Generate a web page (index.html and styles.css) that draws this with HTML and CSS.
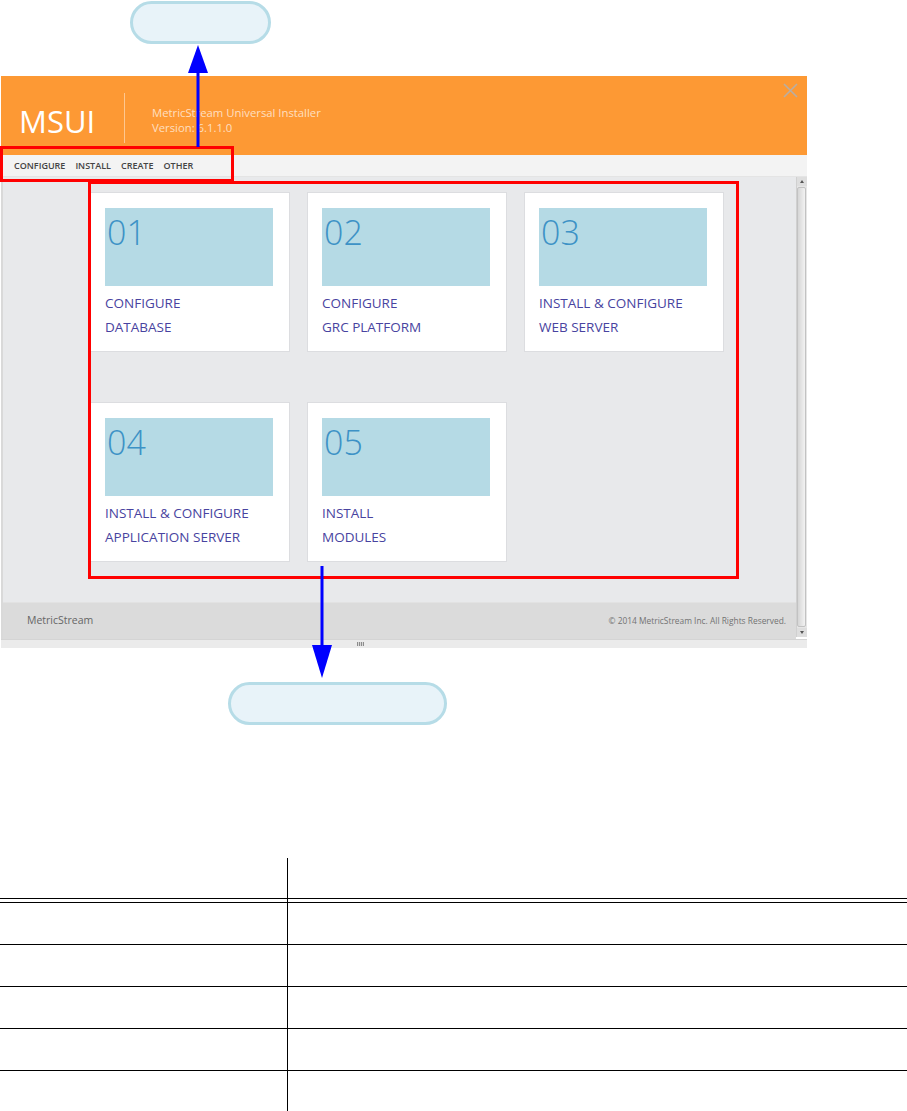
FILE: index.html
```html
<!DOCTYPE html>
<html lang="en">
<head>
  <meta charset="UTF-8">
  <title>MSUI - Home Screen</title>
  <link rel="stylesheet" href="styles.css">
</head>
<body>

  <div class="figure">
    <div class="callout callout-top"></div>

    <div class="window">
      <div class="titlebar">
        <div class="logo">MSUI</div>
        <div class="divider"></div>
        <div class="product">
          <div>MetricStream Universal Installer</div>
          <div>Version: 6.1.1.0</div>
        </div>
        <svg class="close" width="15" height="15" viewBox="0 0 15 15">
          <path d="M1 1 L14 14 M14 1 L1 14" stroke="#b8aea4" stroke-width="1.6" fill="none"/>
        </svg>
      </div>

      <div class="menubar">
        <span>CONFIGURE</span>
        <span>INSTALL</span>
        <span>CREATE</span>
        <span>OTHER</span>
      </div>

      <div class="frame">
        <div class="main">
          <div class="tiles">
            <div class="tile">
              <div class="tile-num">01</div>
              <div class="tile-label">CONFIGURE<br>DATABASE</div>
            </div>
            <div class="tile">
              <div class="tile-num">02</div>
              <div class="tile-label">CONFIGURE<br>GRC PLATFORM</div>
            </div>
            <div class="tile">
              <div class="tile-num">03</div>
              <div class="tile-label">INSTALL &amp; CONFIGURE<br>WEB SERVER</div>
            </div>
            <div class="tile">
              <div class="tile-num">04</div>
              <div class="tile-label">INSTALL &amp; CONFIGURE<br>APPLICATION SERVER</div>
            </div>
            <div class="tile">
              <div class="tile-num">05</div>
              <div class="tile-label">INSTALL<br>MODULES</div>
            </div>
          </div>
          <div class="footer">
            <span class="brand">MetricStream</span>
            <span class="copy">© 2014 MetricStream Inc. All Rights Reserved.</span>
          </div>
        </div>
        <div class="scrollbar">
          <div class="sb-btn sb-up"></div>
          <div class="sb-thumb"></div>
          <div class="sb-btn sb-down"></div>
        </div>
      </div>

      <div class="statusbar"><span class="grip"></span></div>
    </div>

    <div class="callout callout-bottom"></div>

    <!-- annotations drawn over the screenshot -->
    <div class="mark mark-menu"></div>
    <div class="mark mark-tiles"></div>
    <svg class="arrow arrow-up" width="24" height="103" viewBox="0 0 24 103">
      <rect x="10.5" y="26" width="3" height="77" fill="#0000ff"/>
      <polygon points="12,1 2,29 22,29" fill="#0000ff"/>
    </svg>
    <svg class="arrow arrow-down" width="24" height="113" viewBox="0 0 24 113">
      <rect x="10.5" y="0" width="3" height="82" fill="#0000ff"/>
      <polygon points="2,79 22,79 12,112" fill="#0000ff"/>
    </svg>
  </div>

  <table class="fields">
    <thead>
      <tr><th></th><th></th></tr>
    </thead>
    <tbody>
      <tr class="gap"><td></td><td></td></tr>
      <tr><td></td><td></td></tr>
      <tr><td></td><td></td></tr>
      <tr><td></td><td></td></tr>
      <tr><td></td><td></td></tr>
      <tr class="last"><td></td><td></td></tr>
    </tbody>
  </table>

</body>
</html>
```

FILE: styles.css
```css
body {
  margin: 0;
  background: #fff;
  font-family: 'Open Sans', 'DejaVu Sans', sans-serif;
}

.figure {
  position: relative;
  padding-top: 1px;
}

.callout {
  box-sizing: border-box;
  height: 43px;
  border: 3px solid #b6dce7;
  border-radius: 22px;
  background: #e8f3f9;
}

.callout-top {
  width: 141px;
  margin-left: 130px;
}

.callout-bottom {
  width: 219px;
  margin: 34px 0 0 228px;
}

.window {
  width: 806px;
  margin: 32px 0 0 1px;
}

.titlebar {
  position: relative;
  box-sizing: border-box;
  height: 79px;
  padding: 5px 0 0 18px;
  display: flex;
  align-items: center;
  background: #fd9934;
}

.logo {
  width: 105px;
  margin-top: 6px;
  font-size: 31px;
  line-height: 1;
  color: #fff;
}

.divider {
  width: 1px;
  height: 50px;
  background: rgba(255, 255, 255, 0.45);
}

.product {
  margin: 3px 0 0 27px;
  font-size: 11.3px;
  line-height: 15px;
  color: rgba(255, 255, 255, 0.7);
}

.close {
  position: absolute;
  top: 7px;
  right: 9px;
}

.menubar {
  box-sizing: border-box;
  height: 22px;
  padding-left: 13px;
  display: flex;
  align-items: center;
  gap: 10px;
  background: #f3f3f3;
  border-bottom: 1px solid #e4e4e4;
  font-size: 9px;
  font-weight: 600;
  color: #444;
}

.frame {
  height: 462px;
  display: flex;
}

.main {
  flex: 1;
  display: flex;
  flex-direction: column;
  border-left: 2px solid #d9d9d9;
  background: #e8e9eb;
}

.tiles {
  flex: 1;
  padding: 15px 0 0 87px;
  display: grid;
  grid-template-columns: repeat(3, 200px);
  grid-auto-rows: 160px;
  column-gap: 17px;
  row-gap: 50px;
  align-content: start;
}

.tile {
  box-sizing: border-box;
  padding: 15px 0 0 14px;
  background: #fff;
  border: 1px solid #dcdde0;
}

.tile-num {
  box-sizing: border-box;
  width: 168px;
  height: 78px;
  padding: 7px 0 0 2px;
  background: #b5dae5;
  font-size: 34px;
  font-weight: 300;
  line-height: 1;
  color: #3d92c6;
}

.tile-label {
  margin-top: 5px;
  font-size: 13.5px;
  line-height: 24px;
  color: #4843a0;
}

.footer {
  box-sizing: border-box;
  height: 37px;
  padding: 0 10px 2px 24px;
  display: flex;
  align-items: center;
  justify-content: space-between;
  background: #dbdbdb;
  border-top: 1px solid #e2e2e2;
}

.brand {
  font-size: 10.5px;
  color: #666;
}

.copy {
  font-size: 8.4px;
  color: #737373;
}

.scrollbar {
  width: 10px;
  margin-bottom: 2px;
  display: flex;
  flex-direction: column;
  background: #e6e6e6;
  border-left: 1px solid #d0d0d0;
}

.sb-btn {
  height: 9px;
  display: flex;
  align-items: center;
  justify-content: center;
  background: #dedede;
}

.sb-btn::before {
  content: "";
  border-left: 2px solid transparent;
  border-right: 2px solid transparent;
}

.sb-up::before {
  border-bottom: 3px solid #555;
}

.sb-down::before {
  border-top: 3px solid #555;
}

.sb-thumb {
  flex: 1;
  margin: 1px 1px 1px 0;
  border: 1px solid #c2c2c2;
  border-radius: 2px;
  background: linear-gradient(to right, #d6d6d6, #f2f2f2);
}

.statusbar {
  box-sizing: border-box;
  height: 9px;
  padding: 2px 0 0 356px;
  background: #ebebeb;
  border-top: 1px solid #d4d4d4;
}

.grip {
  display: block;
  width: 7px;
  height: 4px;
  background: repeating-linear-gradient(to right, #8c8c8c 0 1px, #d8d8d8 1px 2px);
}

.mark {
  position: absolute;
  box-sizing: border-box;
  border: 3px solid #ff0000;
}

.mark-menu {
  left: 0;
  top: 146px;
  width: 234px;
  height: 36px;
}

.mark-tiles {
  left: 88px;
  top: 181px;
  width: 651px;
  height: 398px;
}

.arrow {
  position: absolute;
}

.arrow-up {
  left: 186px;
  top: 44px;
}

.arrow-down {
  left: 310px;
  top: 566px;
}

.fields {
  width: 100%;
  margin-top: 133px;
  border-collapse: separate;
  border-spacing: 0;
}

.fields th,
.fields td {
  padding: 0;
  font-size: 0;
  height: 41px;
  border-bottom: 1px solid #000;
}

.fields th {
  height: 40px;
}

.fields th:first-child,
.fields td:first-child {
  width: 287px;
  border-right: 1px solid #000;
}

.fields .gap td {
  height: 3px;
}

.fields .last td {
  border-bottom: none;
}
```
